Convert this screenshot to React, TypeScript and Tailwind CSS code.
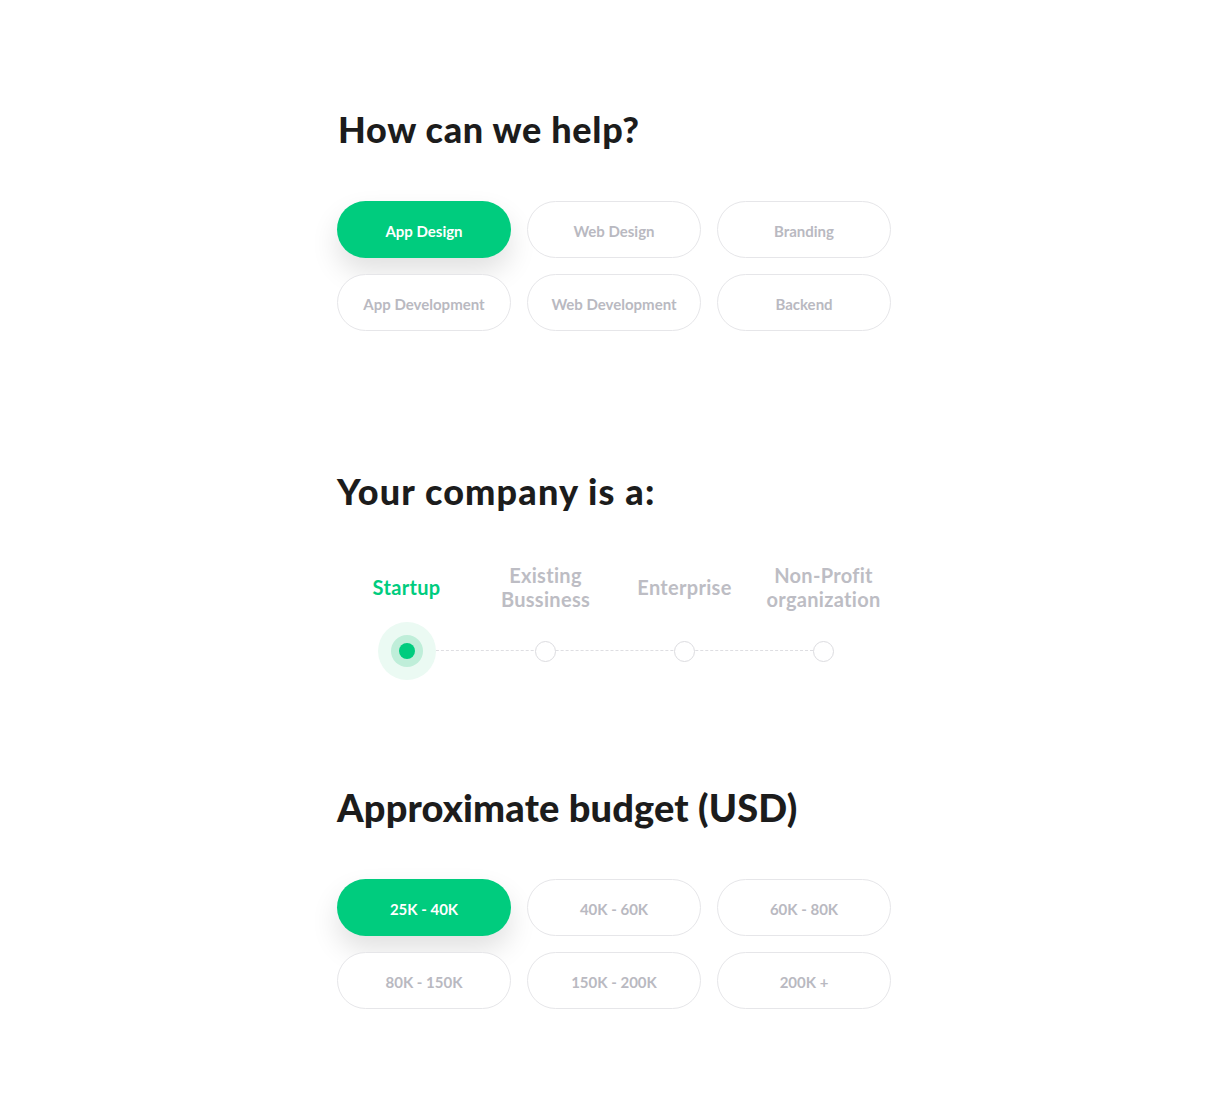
import React, { useState } from 'react';

const services = ['App Design', 'Web Design', 'Branding', 'App Development', 'Web Development', 'Backend'];
const companies = [
  { id: 'startup', label: ['Startup'] },
  { id: 'existing', label: ['Existing', 'Bussiness'] },
  { id: 'enterprise', label: ['Enterprise'] },
  { id: 'nonprofit', label: ['Non-Profit', 'organization'] },
];
const budgets = ['25K - 40K', '40K - 60K', '60K - 80K', '80K - 150K', '150K - 200K', '200K +'];

const font = { fontFamily: '"Lato", "Open Sans", sans-serif' };

const PillGroup: React.FC<{ items: string[]; active: string; onPick: (v: string) => void }> = ({ items, active, onPick }) => (
  <div className="grid grid-cols-[174px_174px_174px] gap-x-4 gap-y-4">
    {items.map(item => (
      <button
        key={item}
        onClick={() => onPick(item)}
        className={`h-[57px] pt-[3px] rounded-full text-[15px] font-bold transition-all ${
          item === active
            ? 'bg-[#00cc7e] text-white shadow-[0_14px_28px_rgba(0,0,0,0.12)]'
            : 'bg-white border border-[#e6e6e9] text-[#b9b9c1] hover:border-[#cfcfd4]'
        }`}
      >
        {item}
      </button>
    ))}
  </div>
);

const App: React.FC = () => {
  const [service, setService] = useState('App Design');
  const [company, setCompany] = useState('startup');
  const [budget, setBudget] = useState('25K - 40K');

  return (
    <div className="min-h-screen bg-white" style={font}>
      <div className="w-[556px] ml-[337px] pt-[108px] pb-[100px]">
        {/* Services */}
        <h2 className="pl-px text-[36px] leading-[1.2] font-black tracking-[0.7px] text-[#1c1c1c]">How can we help?</h2>
        <div className="mt-[50px]">
          <PillGroup items={services} active={service} onPick={setService} />
        </div>

        {/* Company type */}
        <h2 className="mt-[139px] text-[36px] leading-[1.2] font-black tracking-[1.15px] text-[#1c1c1c]">Your company is a:</h2>
        <div className="mt-[50px] grid grid-cols-4">
          {companies.map(c => (
            <button
              key={c.id}
              onClick={() => setCompany(c.id)}
              className={`h-[48px] flex flex-col items-center justify-center text-[20px] leading-[24px] font-bold tracking-[0.3px] ${
                c.id === company ? 'text-[#00cc7e]' : 'text-[#bdbdc4]'
              }`}
            >
              {c.label.map(l => (
                <span key={l}>{l}</span>
              ))}
            </button>
          ))}
        </div>
        <div className="relative mt-[10px] h-[60px]">
          <div className="absolute left-[69px] right-[70px] top-[29px] border-t border-dashed border-[#dedee2]" />
          <div className="relative grid grid-cols-4 h-full">
            {companies.map(c => (
              <div key={c.id} className="flex items-center justify-center">
                {c.id === company ? (
                  <div className="w-[58px] h-[58px] rounded-full bg-[#ebfaf3] flex items-center justify-center">
                    <div className="w-[32px] h-[32px] rounded-full bg-[#bfeed9] flex items-center justify-center">
                      <div className="w-[16px] h-[16px] rounded-full bg-[#00cc7e]" />
                    </div>
                  </div>
                ) : (
                  <button
                    onClick={() => setCompany(c.id)}
                    className="w-[21px] h-[21px] rounded-full bg-white border border-[#dcdce0]"
                  />
                )}
              </div>
            ))}
          </div>
        </div>

        {/* Budget */}
        <h2 className="mt-[104px] text-[38px] leading-[1.2] font-black tracking-[0.15px] text-[#1c1c1c]">Approximate budget (USD)</h2>
        <div className="mt-[48px]">
          <PillGroup items={budgets} active={budget} onPick={setBudget} />
        </div>
      </div>
    </div>
  );
};

export default App;
